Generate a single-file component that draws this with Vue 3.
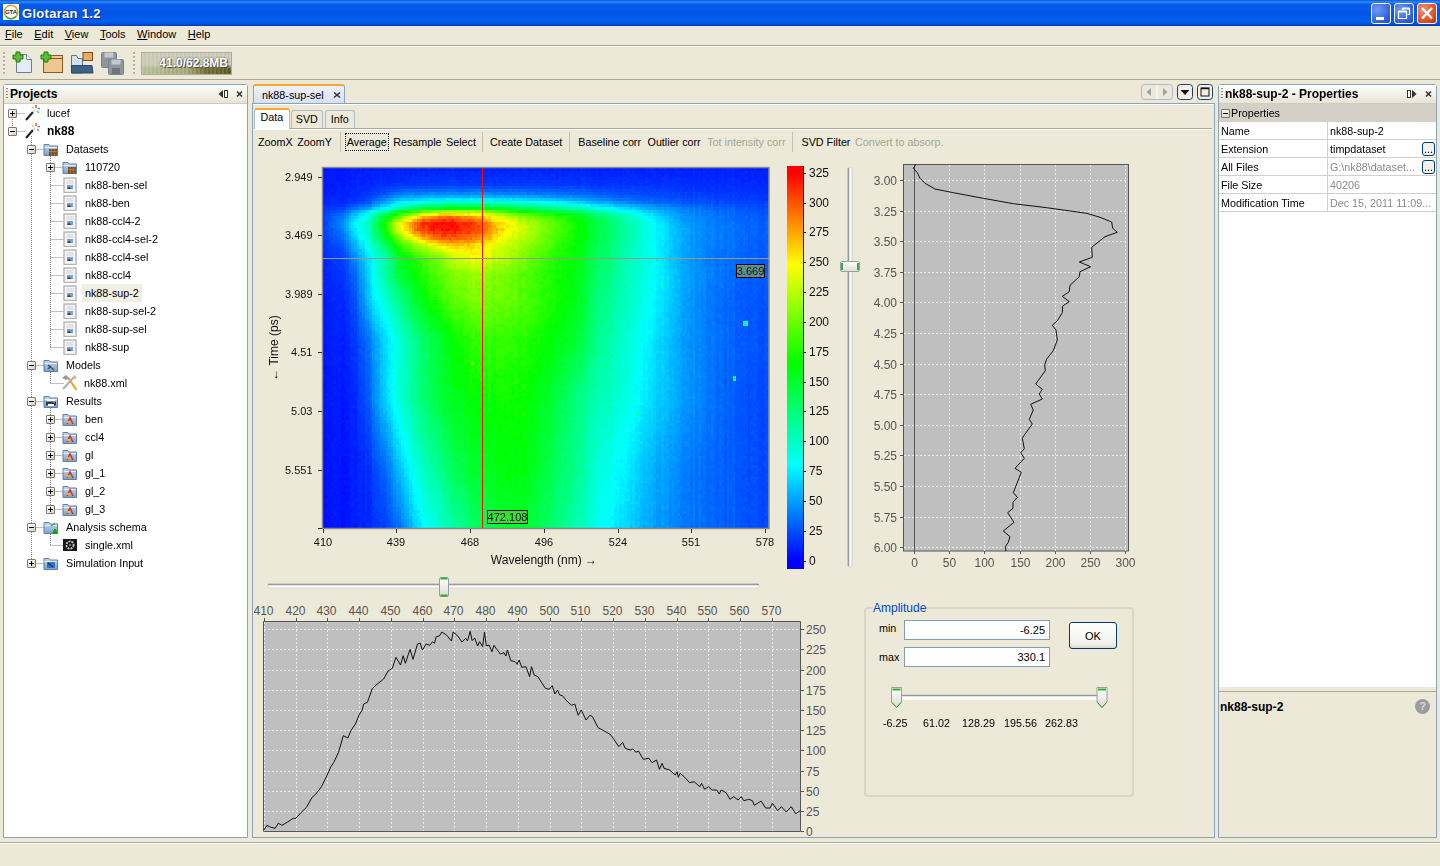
<template>
  <div class="window">
    <!-- icon sprite -->
    <svg class="sprite" width="0" height="0">
      <defs>
        <linearGradient id="fold" x1="0" y1="0" x2="0" y2="1">
          <stop offset="0" stop-color="#c4d6ea" />
          <stop offset="1" stop-color="#7ea3cc" />
        </linearGradient>
        <linearGradient id="thumbH" x1="0" y1="0" x2="0" y2="1">
          <stop offset="0" stop-color="#ffffff" />
          <stop offset="1" stop-color="#dcdcd0" />
        </linearGradient>
        <linearGradient id="cbar" x1="0" y1="0" x2="0" y2="1">
          <stop v-for="s in barStops" :key="s.o" :offset="s.o" :stop-color="s.c" />
        </linearGradient>
      </defs>
      <symbol id="i-folder" viewBox="0 0 16 16">
        <path d="M1 3.5h5l1.2 1.5H14.5V14.5H1z" fill="url(#fold)" stroke="#5c80a8" />
        <path d="M1.5 6.5H14" stroke="#e8f0f8" />
      </symbol>
      <symbol id="i-wand" viewBox="0 0 16 16">
        <path d="M2 15L9 7" stroke="#222" stroke-width="2" />
        <path d="M9 7L11 4.8" stroke="#ddd" stroke-width="2" />
        <path d="M12 0v3" stroke="#e04848" stroke-width="1.4" />
        <path d="M13.5 3.5h2.5" stroke="#4a8ce0" stroke-width="1.4" />
        <path d="M13 6l2 2" stroke="#58c858" stroke-width="1.4" />
        <path d="M8 2l1.5 1.5" stroke="#e8c040" stroke-width="1.4" />
      </symbol>
      <symbol id="i-data" viewBox="0 0 16 16">
        <use href="#i-folder" width="16" height="16" />
        <rect x="6" y="8" width="8" height="7" fill="#7c4f24" />
        <path d="M6 10.5h8M8.5 8v7M11.5 8v7" stroke="#b58850" stroke-width=".7" />
      </symbol>
      <symbol id="i-doc" viewBox="0 0 16 16">
        <rect x="2" y="1" width="12" height="14.500" fill="#f4f4f4" stroke="#b4b4b4" stroke-width="1.400" />
        <path d="M4.500 4h7M4.500 6h7" stroke="#d0d0d0" />
        <rect x="5" y="8" width="6" height="4" fill="#78a2d4" />
        <path d="M5 12l2-2.500 2.500 2.500z" fill="#2c4a70" />
      </symbol>
      <symbol id="i-models" viewBox="0 0 16 16">
        <use href="#i-folder" width="16" height="16" />
        <path d="M5 8l6 5M5 12l3-3" stroke="#3a4a60" stroke-width="1.3" />
      </symbol>
      <symbol id="i-tools" viewBox="0 0 18 18">
        <path d="M3 2.5L8 5 15.5 16" stroke="#e8a820" stroke-width="2.2" fill="none" />
        <path d="M14 2L2 15" stroke="#b0b0b0" stroke-width="2" />
        <path d="M1 4l4-3 3 3-3 2z" fill="#9a9a9a" />
        <path d="M12 1.500l3 .5 1 2.500-3 .5z" fill="#c0c0c0" />
      </symbol>
      <symbol id="i-results" viewBox="0 0 16 16">
        <use href="#i-folder" width="16" height="16" />
        <rect x="4" y="6.5" width="8" height="2" fill="#fff" />
        <rect x="3" y="8.5" width="10" height="4" fill="#2c3c50" />
        <rect x="5" y="11" width="6" height="2" fill="#fff" />
        <path d="M10 9.5h2" stroke="#e04848" />
      </symbol>
      <symbol id="i-result" viewBox="0 0 16 16">
        <use href="#i-folder" width="16" height="16" />
        <path d="M5 13l3-6 3 6" fill="none" stroke="#d82c20" stroke-width="1.5" />
        <path d="M4.5 11h4" stroke="#f0b020" stroke-width="2" />
      </symbol>
      <symbol id="i-schema" viewBox="0 0 16 16">
        <use href="#i-folder" width="16" height="16" />
        <path d="M8 7l4-3" stroke="#48a848" stroke-width="1.3" />
        <path d="M9 15l2-5h2l2 5z" fill="#18a018" />
      </symbol>
      <symbol id="i-film" viewBox="0 0 16 16">
        <rect x="1" y="2" width="14" height="12" fill="#181818" />
        <circle cx="8" cy="8" r="3.6" fill="none" stroke="#c4c4c4" stroke-width="1.8" stroke-dasharray="2 1" />
        <circle cx="8" cy="8" r="1" fill="#999" />
      </symbol>
      <symbol id="i-sim" viewBox="0 0 16 16">
        <use href="#i-folder" width="16" height="16" />
        <rect x="4" y="7" width="8" height="6" fill="#2f70c8" />
        <path d="M5 8l5 4" stroke="#16345c" stroke-width="1.2" />
      </symbol>
    </svg>

    <header class="titlebar">
      <svg class="app-logo" width="16" height="16" viewBox="0 0 16 16">
        <rect width="16" height="16" fill="#fff" />
        <circle cx="8" cy="8" r="6.8" fill="none" stroke="#e8a020" stroke-width="1.6" />
        <path d="M3 12.5A6.8 6.8 0 0 0 13 12.5" fill="none" stroke="#38a838" stroke-width="1.6" />
        <text x="8" y="10.4" class="logo-text" text-anchor="middle">GTA</text>
      </svg>
      <span class="app-title">Glotaran 1.2</span>
      <div class="win-btns">
        <span class="win-btn">
          <svg width="20" height="21" viewBox="0 0 20 21"><rect x="5" y="14" width="8" height="3" fill="#fff" /></svg>
        </span>
        <span class="win-btn">
          <svg width="20" height="21" viewBox="0 0 20 21">
            <path d="M8.5 7V5.500h7v6H13.500M4.500 8.500h8v7h-8z" fill="none" stroke="#fff" stroke-width="1.200" />
            <path d="M4.500 8.500h8M8.500 5.500h7" stroke="#fff" stroke-width="2" />
          </svg>
        </span>
        <span class="win-btn close">
          <svg width="20" height="21" viewBox="0 0 20 21"><path d="M5 5l10 10.500M15 5L5 15.500" stroke="#fff" stroke-width="2.200" /></svg>
        </span>
      </div>
    </header>

    <nav class="menubar">
      <span v-for="m in menus" :key="m"><u>{{ m[0] }}</u>{{ m.slice(1) }}</span>
    </nav>

    <div class="toolbar">
      <i class="grip"></i>
      <svg class="tb-icon first" width="22" height="24" viewBox="0 0 22 24">
        <path d="M4.500 3.500h10l5 5v13h-15z" fill="#e4ecf6" stroke="#6d7f96" />
        <path d="M14.500 3.500v5h5" fill="#fff" stroke="#6d7f96" />
        <path d="M4 1v3H1v4h3v3h4V8h3V4H8V1z" fill="#58c030" stroke="#207a10" />
      </svg>
      <svg class="tb-icon" width="24" height="24" viewBox="0 0 24 24">
        <rect x="3.500" y="4.500" width="19" height="17" fill="#f0c690" stroke="#8a5a28" />
        <path d="M3.500 7.500h19" stroke="#8a5a28" />
        <path d="M4 1v3H1v4h3v3h4V8h3V4H8V1z" fill="#58c030" stroke="#207a10" />
      </svg>
      <svg class="tb-icon" width="24" height="24" viewBox="0 0 24 24">
        <path d="M1.500 22V4.500h5l1.500 3h4.500V22z" fill="#d4e0ee" stroke="#5a7694" />
        <rect x="13" y="1.500" width="9.500" height="8" fill="#e6ad68" stroke="#7a4c1e" />
        <path d="M1.500 14.500h20.500l1 7.500H1.500z" fill="#3d6286" stroke="#2c4866" />
      </svg>
      <svg class="tb-icon" width="24" height="24" viewBox="0 0 24 24">
        <rect x="1.500" y="1.500" width="15" height="15" rx="1" fill="#8e969e" stroke="#7a8288" />
        <rect x="4.500" y="1.500" width="9" height="5" fill="#c2c8ce" />
        <rect x="8.500" y="8.500" width="15" height="15" rx="1" fill="#8e969e" stroke="#7a8288" />
        <rect x="11.500" y="8.500" width="9" height="5" fill="#c2c8ce" />
        <rect x="12" y="17" width="8" height="6" fill="#6c747c" />
      </svg>
      <i class="grip second"></i>
      <div class="memory"><span>41.0/62.8MB</span></div>
    </div>

    <main class="workspace">
      <!-- left: project tree -->
      <section class="panel projects">
        <div class="panel-head">
          <i class="head-grip"></i>
          <span class="panel-title">Projects</span>
          <svg class="head-act" width="28" height="12" viewBox="0 0 28 12">
            <path d="M6 2v8L1.500 6z" fill="#333" />
            <rect x="7.500" y="2.500" width="3" height="7" fill="#fff" stroke="#333" />
            <path d="M20 3.500l5 5M25 3.500l-5 5" stroke="#333" stroke-width="1.600" />
          </svg>
        </div>
        <div class="tree">
          <svg class="tree-lines" width="243" height="734" viewBox="4 104 243 734">
            <path :d="treeLines" fill="none" stroke="#808080" stroke-dasharray="1 1" />
          </svg>
          <div v-for="r in rows" :key="r.y" class="tree-row" :class="'lvl' + r.lvl">
            <span class="handle" :class="r.exp"></span>
            <svg class="tree-icon" :class="r.icon"><use :href="'#i-' + r.icon" width="100%" height="100%" /></svg>
            <span class="tree-label" :class="{ bold: r.bold, picked: r.picked }">{{ r.label }}</span>
          </div>
        </div>
      </section>

      <!-- center: editor with the plots -->
      <section class="editor">
        <div class="doc-tabs">
          <div class="doc-tab">
            <span>nk88-sup-sel</span>
            <svg width="8" height="8" viewBox="0 0 8 8"><path d="M1 1.500l6 5M7 1.500l-6 5" stroke="#333" stroke-width="1.600" /></svg>
          </div>
          <div class="doc-ctl">
            <svg width="32" height="16" viewBox="0 0 32 16">
              <rect x=".5" y=".5" width="31" height="15" rx="3" fill="#ece9d8" stroke="#a8bad0" />
              <path d="M16 1v14" stroke="#fff" />
              <path d="M10 4v8L5.500 8z" fill="#a0a0a0" />
              <path d="M22 4v8l4.500-4z" fill="#a0a0a0" />
            </svg>
            <svg width="16" height="16" viewBox="0 0 16 16">
              <rect x=".5" y=".5" width="15" height="15" rx="3" fill="#f2f0e4" stroke="#1c3f68" />
              <path d="M3.500 6h9L8 11z" fill="#111" />
            </svg>
            <svg width="16" height="16" viewBox="0 0 16 16">
              <rect x=".5" y=".5" width="15" height="15" rx="3" fill="#f2f0e4" stroke="#1c3f68" />
              <rect x="4" y="4" width="8" height="8" fill="none" stroke="#111" />
              <path d="M4 4.500h8" stroke="#111" stroke-width="1.500" />
            </svg>
          </div>
        </div>

        <div class="doc-pane">
          <div class="sub-tabs">
            <span class="sub-tab active">Data</span>
            <span class="sub-tab">SVD</span>
            <span class="sub-tab info">Info</span>
          </div>
          <div class="sub-pane">
            <div class="actions">
              <span class="act">ZoomX</span>
              <span class="act nudge-in">ZoomY</span>
              <i class="sep nudge-out"></i>
              <span class="act focused">Average</span>
              <span class="act">Resample</span>
              <span class="act nudge-in">Select</span>
              <i class="sep"></i>
              <span class="act">Create Dataset</span>
              <i class="sep"></i>
              <span class="act nudge-out">Baseline corr</span>
              <span class="act">Outlier corr</span>
              <span class="act off">Tot intensity corr</span>
              <i class="sep"></i>
              <span class="act nudge-out">SVD Filter</span>
              <span class="act off nudge-in">Convert to absorp.</span>
            </div>

            <div class="plots-top">
              <div class="heat">
                <canvas ref="heatCanvas" class="heat-canvas" width="446" height="360"></canvas>
                <svg width="529" height="415" viewBox="254 160 529 415">
                  <rect x="322.500" y="167.500" width="446.500" height="361" fill="none" stroke="#8a8a8a" stroke-width="1.500" />
                  <path d="M482.500 168V528" stroke="#f01010" />
                  <path d="M323 258.500H769" stroke="#9a9a80" />
                  <g v-for="t in heatY" :key="t.l">
                    <path :d="`M318 ${t.y + .5}h4`" stroke="#333" />
                    <text x="312.500" :y="t.y + 1" class="tk" text-anchor="end" dominant-baseline="middle">{{ t.l }}</text>
                  </g>
                  <path d="M318 528.500h4" stroke="#333" />
                  <g v-for="t in heatX" :key="t.l">
                    <path :d="`M${t.x + .5} 529v4`" stroke="#333" />
                    <text :x="t.x" y="543.500" class="tk" text-anchor="middle" dominant-baseline="middle">{{ t.l }}</text>
                  </g>
                  <text x="544" y="561" class="tk big" text-anchor="middle" dominant-baseline="middle">Wavelength (nm) →</text>
                  <text transform="translate(275 348) rotate(-90)" class="tk big" text-anchor="middle" dominant-baseline="middle">← Time (ps)</text>
                  <rect x="736.500" y="264.500" width="28" height="13" fill="#5f8f8f" stroke="#000" />
                  <text x="750.500" y="272" class="tk" text-anchor="middle" dominant-baseline="middle">3.669</text>
                  <rect x="487.500" y="510.500" width="40" height="13" fill="#33e033" stroke="#000" />
                  <text x="507.500" y="518" class="tk" text-anchor="middle" dominant-baseline="middle">472.108</text>
                </svg>
              </div>

              <svg width="53" height="415" viewBox="783 160 53 415">
                <rect x="787" y="166" width="16" height="403" fill="url(#cbar)" />
                <path d="M803.500 166V569" stroke="#222" />
                <g v-for="t in barTicks" :key="t.l">
                  <path :d="`M803 ${t.y + .5}h3`" stroke="#222" />
                  <text x="809" :y="t.y + 1" class="tk big" dominant-baseline="middle">{{ t.l }}</text>
                </g>
              </svg>

              <svg width="28" height="415" viewBox="836 160 28 415">
                <rect x="848" y="167" width="4" height="400" rx="2" fill="#fff" stroke="#b8b8a8" stroke-width=".6" />
                <path d="M848.500 168V566" stroke="#999" stroke-width="1.500" />
                <rect x="840.500" y="261.500" width="19" height="10" rx="1.500" fill="url(#thumbH)" stroke="#8ea4a4" />
                <path d="M842 263v7M858 263v7" stroke="#30a030" stroke-width="1.800" />
              </svg>

              <svg width="276" height="415" viewBox="864 160 276 415">
                <rect x="903.500" y="164.500" width="225" height="386.500" fill="#bfbfbf" stroke="#555" />
                <path v-for="t in profX" :key="t.l" :d="`M${t.x} 165V551`" stroke="#eaeaea" stroke-dasharray="2 2" />
                <path v-for="t in profY" :key="t.l" :d="`M904 ${t.y}H1128`" stroke="#eaeaea" stroke-dasharray="2 2" />
                <path d="M914.500 165V551" stroke="#555" />
                <polyline :points="profileLine" fill="none" stroke="#111" />
                <g v-for="t in profX" :key="t.l">
                  <path :d="`M${t.x} 551v3`" stroke="#555" />
                  <text :x="t.x" y="564" class="pl" text-anchor="middle" dominant-baseline="middle">{{ t.l }}</text>
                </g>
                <g v-for="t in profY" :key="t.l">
                  <path :d="`M900 ${t.y}h3`" stroke="#555" />
                  <text x="897" :y="t.y + 1" class="pl" text-anchor="end" dominant-baseline="middle">{{ t.l }}</text>
                </g>
              </svg>
            </div>

            <div class="plots-bottom">
              <div class="spectrum">
                <svg class="h-slider" width="606" height="25" viewBox="254 575 606 25">
                  <rect x="267.500" y="584" width="492" height="4" rx="2" fill="#fff" stroke="#c8c8b8" stroke-width=".6" />
                  <path d="M268 584.500H759" stroke="#999" stroke-width="1.500" />
                  <rect x="439.500" y="577.500" width="9" height="19" rx="1.500" fill="url(#thumbH)" stroke="#8ea4a4" />
                  <path d="M440.500 578.500h7M440.500 595.500h7" stroke="#30b030" stroke-width="1.800" />
                </svg>
                <svg width="606" height="238" viewBox="254 600 606 238">
                  <rect x="263.500" y="621.500" width="537" height="209.500" fill="#bfbfbf" />
                  <path v-for="t in specX" :key="t.l" :d="`M${t.x} 622V831`" stroke="#eaeaea" stroke-dasharray="2 2" />
                  <path v-for="t in specY" :key="t.l" :d="`M264 ${t.y}H800`" stroke="#eaeaea" stroke-dasharray="2 2" />
                  <path d="M263.500 831.500V621.500H800.500V831.500z" fill="none" stroke="#555" />
                  <polyline :points="spectrumLine" fill="none" stroke="#111" />
                  <g v-for="t in specX" :key="t.l">
                    <path :d="`M${t.x} 618v3`" stroke="#555" />
                    <text :x="t.x - 1" y="612" class="pl" text-anchor="middle" dominant-baseline="middle">{{ t.l }}</text>
                  </g>
                  <g v-for="t in specY" :key="t.l">
                    <path :d="`M801 ${t.y}h3`" stroke="#555" />
                    <text x="806" :y="t.y + 1" class="pl" dominant-baseline="middle">{{ t.l }}</text>
                  </g>
                </svg>
              </div>

              <fieldset class="amplitude">
                <legend>Amplitude</legend>
                <div class="amp-form">
                  <div class="amp-fields">
                    <label><span class="min-cap">min</span><input value="-6.25" readonly /></label>
                    <label>max<input value="330.1" readonly /></label>
                  </div>
                  <button class="ok">OK</button>
                </div>
                <svg class="amp-slider" width="224" height="24" viewBox="888 686 224 24">
                  <rect x="902" y="695" width="195" height="5" fill="#fff" />
                  <path d="M902 695.500H1097" stroke="#999" stroke-width="1.500" />
                  <g v-for="x in [891.500, 1097]" :key="x">
                    <path :d="`M${x} 687.500h10v14.500l-5 5.500-5-5.500z`" fill="url(#thumbH)" stroke="#8ea4a4" />
                    <path :d="`M${x + 1} 689.500h8`" stroke="#30b030" stroke-width="2" />
                    <path :d="`M${x + .5} 702.500l4.500 5 4.500-5`" fill="none" stroke="#30a030" />
                  </g>
                </svg>
                <div class="amp-labels">
                  <span>-6.25</span><span>61.02</span><span>128.29</span><span>195.56</span><span>262.83</span>
                </div>
              </fieldset>
            </div>
          </div>
        </div>
      </section>

      <!-- right: properties -->
      <section class="panel props">
        <div class="panel-head">
          <i class="head-grip"></i>
          <span class="panel-title">nk88-sup-2 - Properties</span>
          <svg class="head-act" width="28" height="12" viewBox="0 0 28 12">
            <rect x="1.500" y="2.500" width="3" height="7" fill="#fff" stroke="#333" />
            <path d="M6 2v8l4.500-4z" fill="#333" />
            <path d="M20 3.500l5 5M25 3.500l-5 5" stroke="#333" stroke-width="1.600" />
          </svg>
        </div>
        <div class="prop-table">
          <div class="prop-group"><span class="handle open"></span>Properties</div>
          <div v-for="p in props" :key="p.k" class="prop-row">
            <span class="prop-key">{{ p.k }}</span>
            <span class="prop-val" :class="{ ro: p.ro }">{{ p.v }}</span>
            <button v-if="p.more" class="more">...</button>
          </div>
        </div>
        <div class="prop-help">
          <b>nk88-sup-2</b>
          <span class="help-btn">?</span>
        </div>
      </section>
    </main>

    <footer class="statusbar"></footer>
  </div>
</template>

<script setup>
import { ref, onMounted } from 'vue'

const menus = ['File', 'Edit', 'View', 'Tools', 'Window', 'Help']

// label, level, expander, icon
const tree = [
  ['lucef', 0, 'closed', 'wand'],
  ['nk88', 0, 'open', 'wand', 'bold'],
  ['Datasets', 1, 'open', 'data'],
  ['110720', 2, 'closed', 'data'],
  ['nk88-ben-sel', 2, '', 'doc'],
  ['nk88-ben', 2, '', 'doc'],
  ['nk88-ccl4-2', 2, '', 'doc'],
  ['nk88-ccl4-sel-2', 2, '', 'doc'],
  ['nk88-ccl4-sel', 2, '', 'doc'],
  ['nk88-ccl4', 2, '', 'doc'],
  ['nk88-sup-2', 2, '', 'doc', 'picked'],
  ['nk88-sup-sel-2', 2, '', 'doc'],
  ['nk88-sup-sel', 2, '', 'doc'],
  ['nk88-sup', 2, '', 'doc'],
  ['Models', 1, 'open', 'models'],
  ['nk88.xml', 2, '', 'tools'],
  ['Results', 1, 'open', 'results'],
  ['ben', 2, 'closed', 'result'],
  ['ccl4', 2, 'closed', 'result'],
  ['gl', 2, 'closed', 'result'],
  ['gl_1', 2, 'closed', 'result'],
  ['gl_2', 2, 'closed', 'result'],
  ['gl_3', 2, 'closed', 'result'],
  ['Analysis schema', 1, 'open', 'schema'],
  ['single.xml', 2, '', 'film'],
  ['Simulation Input', 1, 'closed', 'sim'],
]
const rows = tree.map((r, i) => ({
  label: r[0], lvl: r[1], exp: r[2], icon: r[3], y: 113 + 18 * i,
  bold: r[4] === 'bold', picked: r[4] === 'picked',
}))

// dotted tree connectors
let lines = 'M12.500 113V131M31.500 136V563M50.500 154V347M50.500 370V383M50.500 406V509M50.500 532V545'
for (const r of rows) {
  const hx = [12.5, 31.5, 50.5][r.lvl]
  const from = r.exp ? hx + 5 : hx
  lines += `M${from} ${r.y + .5}H${hx + 13}`
}
const treeLines = lines

const props = [
  { k: 'Name', v: 'nk88-sup-2' },
  { k: 'Extension', v: 'timpdataset', more: true },
  { k: 'All Files', v: 'G:\\nk88\\dataset...', ro: true, more: true },
  { k: 'File Size', v: '40206', ro: true },
  { k: 'Modification Time', v: 'Dec 15, 2011 11:09...', ro: true },
]

// colour map of the heat plot and its legend
const cmap = [
  [0, [0, 0, 255]],
  [80, [0, 255, 255]],
  [165, [0, 255, 0]],
  [248, [255, 255, 0]],
  [325, [255, 0, 0]],
]
const toRgb = (v) => {
  if (v <= 0) return cmap[0][1]
  for (let i = 1; i < cmap.length; i++) {
    if (v <= cmap[i][0]) {
      const a = cmap[i - 1], b = cmap[i]
      const t = (v - a[0]) / (b[0] - a[0])
      return a[1].map((c, j) => Math.round(c + (b[1][j] - c) * t))
    }
  }
  return cmap[4][1]
}
const barStops = [{ o: 0, c: 'rgb(255,0,0)' }, ...cmap.slice().reverse().map(([v, c]) => ({
  o: ((560.7 - v * 1.194 - 166) / 403).toFixed(4),
  c: `rgb(${c.join(',')})`,
})), { o: 1, c: 'rgb(0,0,255)' }]

const barTicks = []
for (let v = 325; v >= 0; v -= 25) barTicks.push({ l: String(v), y: Math.round(560.7 - v * 1.194) })

const heatY = [['2.949', 177], ['3.469', 235], ['3.989', 294], ['4.51', 352], ['5.03', 411], ['5.551', 470]].map(([l, y]) => ({ l, y }))
const heatX = [['410', 323], ['439', 396], ['468', 470], ['496', 544], ['524', 618], ['551', 691], ['578', 765]].map(([l, x]) => ({ l, x }))

const profX = [0, 50, 100, 150, 200, 250, 300].map((v, i) => ({ l: String(v), x: Math.round(914 + i * 35.2) + .5 }))
const profY = []
for (let i = 0; i <= 12; i++) profY.push({ l: (3 + i * .25).toFixed(2), y: Math.round(180 + i * 30.6) + .5 })

const specX = []
for (let i = 0; i < 17; i++) specX.push({ l: String(410 + i * 10), x: Math.round(263.8 + i * 31.75) + .5 })
const specY = []
for (let i = 0; i <= 10; i++) specY.push({ l: String(250 - i * 25), y: Math.round(629.3 + i * 20.18) + .5 })

// traces read off the plots
const profilePts = [408,13,400,25,412,38,420,55,435,70,465,87,520,98,610,115,700,131,800,143,920,160,960,172,995,186,998,205,1012,217,975,230,965,238,935,262,937,292,898,306,932,320,900,335,898,350,870,376,868,395,847,409,868,425,848,438,847,458,832,482,817,496,828,510,832,540,820,572,800,597,794,615,796,632,767,672,787,688,778,702,787,717,752,733,760,750,748,778,757,792,733,825,727,835,733,866,722,878,733,895,705,925,724,937,700,998,712,1012,699,1027,699,1045,683,1058,702,1087,670,1113,690,1130,685,1147,676,1160,678,1173]
const spectrumPts = [37,780,45,766,55,772,67,775,75,760,85,766,100,756,115,745,122,745,135,728,150,712,165,682,175,672,190,650,205,615,215,590,222,578,235,548,248,497,260,504,268,482,280,462,290,435,298,420,302,402,312,397,325,356,335,345,355,327,367,303,378,295,388,262,400,285,407,257,413,280,425,238,433,268,445,222,452,219,458,240,468,222,478,226,485,215,490,220,495,200,503,198,510,186,522,195,535,213,540,186,552,198,563,216,573,205,578,213,585,184,590,212,597,204,605,228,610,215,618,230,623,186,628,228,635,225,643,245,648,226,665,252,675,248,680,258,684,240,693,272,705,275,710,283,715,270,722,292,733,290,743,320,748,290,755,315,765,320,785,355,795,358,803,347,810,372,817,360,823,375,830,377,845,397,855,406,863,402,872,436,880,420,893,450,903,436,910,440,925,473,940,482,957,493,965,505,980,530,990,517,997,535,1010,540,1018,537,1025,547,1032,543,1045,568,1060,565,1068,578,1080,570,1088,598,1095,580,1100,595,1115,600,1130,615,1135,605,1138,622,1143,610,1155,622,1168,638,1180,635,1195,650,1200,640,1208,658,1218,650,1228,660,1240,660,1247,672,1252,660,1265,668,1275,688,1285,680,1297,690,1305,680,1312,692,1325,688,1335,692,1340,706,1358,693,1370,714,1382,714,1388,700,1402,722,1412,710,1425,726,1438,710,1450,731,1462,722]
const toPoints = (pts, fx, fy) => {
  const out = []
  for (let i = 0; i < pts.length; i += 2) out.push(`${fx(pts[i]).toFixed(1)},${fy(pts[i + 1]).toFixed(1)}`)
  return out.join(' ')
}
const profileLine = toPoints(profilePts, (x) => 780 + x / 3, (y) => 160 + y / 3)
const spectrumLine = toPoints(spectrumPts, (x) => 250 + x / 2.657, (y) => 570 + y / 3)

// heat map control values, bilinear interpolated
const gx = [323, 340, 355, 370, 385, 400, 420, 440, 460, 480, 500, 525, 550, 575, 600, 625, 650, 675, 700, 735, 768]
const gy = [168, 185, 193, 198, 203, 208, 213, 218, 224, 230, 238, 246, 258, 275, 300, 340, 400, 470, 528]
const grid = [
  [6,7,8,8,9,10,10,10,10,10,10,10,10,10,10,10,10,10,10,10,10],
  [8,9,10,12,14,16,18,18,18,18,18,18,18,18,16,16,15,15,14,14,12],
  [8,10,12,16,24,34,38,40,40,40,38,36,34,32,28,24,22,20,18,16,15],
  [10,12,14,20,38,52,60,62,62,62,60,58,52,46,38,30,26,24,22,18,16],
  [12,14,18,30,55,78,92,100,104,104,100,92,84,72,58,44,36,30,26,22,20],
  [14,18,32,50,75,105,135,150,155,152,145,132,120,105,85,68,52,42,35,28,24],
  [16,28,55,85,125,170,215,240,245,238,210,180,165,148,118,92,68,50,40,32,26],
  [18,35,65,95,155,205,275,300,295,275,240,212,190,168,138,108,78,54,42,33,28],
  [18,40,75,105,170,245,310,325,318,300,262,225,200,172,142,112,86,58,44,35,30],
  [18,35,72,105,165,240,300,320,318,302,262,228,200,172,142,112,86,60,45,35,30],
  [16,30,62,98,148,205,265,298,300,282,250,222,196,168,142,112,86,60,45,35,30],
  [14,24,52,88,130,178,218,250,262,255,235,212,190,165,138,108,84,60,44,34,28],
  [12,18,40,75,105,150,180,205,235,245,225,205,180,165,135,105,85,60,42,32,28],
  [10,15,30,70,110,145,170,195,210,215,205,190,175,160,130,105,85,62,45,32,28],
  [8,12,22,65,92,120,155,180,198,205,200,190,175,160,125,102,82,60,42,30,25],
  [7,10,15,38,68,92,125,150,170,182,182,175,165,150,118,95,75,56,42,30,25],
  [6,8,10,30,65,92,122,145,158,165,168,165,150,125,105,90,70,55,42,28,22],
  [5,7,8,15,32,60,95,118,140,152,160,160,140,120,92,75,57,45,35,28,22],
  [5,6,8,12,20,35,72,95,115,135,148,148,132,108,85,68,52,42,35,28,22],
]
const locate = (arr, v) => {
  let i = 0
  while (i < arr.length - 2 && v > arr[i + 1]) i++
  return [i, Math.min(1, Math.max(0, (v - arr[i]) / (arr[i + 1] - arr[i])))]
}
const sample = (x, y) => {
  const [i, tx] = locate(gx, x)
  const [j, ty] = locate(gy, y)
  const top = grid[j][i] * (1 - tx) + grid[j][i + 1] * tx
  const bot = grid[j + 1][i] * (1 - tx) + grid[j + 1][i + 1] * tx
  return top * (1 - ty) + bot * ty
}

const heatCanvas = ref(null)
onMounted(() => {
  const ctx = heatCanvas.value.getContext('2d')
  let seed = 4711
  const rnd = () => {
    seed = (seed * 16807) % 2147483647
    return seed / 2147483647 - .5
  }
  const cw = 2.625, ch = 3
  const cols = Math.ceil(446 / cw)
  const streak = Array.from({ length: cols }, () => rnd() * 5)
  for (let r = 0; r < 120; r++) {
    for (let c = 0; c < cols; c++) {
      const x = 323 + c * cw, y = 168 + r * ch
      const v = sample(x + cw / 2, y + ch / 2)
      const noisy = v + streak[c] * (y > 200 ? 1 : .4) + rnd() * (3 + v * .035)
      ctx.fillStyle = `rgb(${toRgb(noisy).join(',')})`
      ctx.fillRect(Math.floor(c * cw), r * ch, Math.ceil(cw), ch)
    }
  }
  // stray hot pixels
  const spots = [[420, 153, 5, 5, 105], [410, 208, 3, 5, 130], [337, 114, 3, 3, 95], [148, 194, 3, 3, 215], [314, 245, 2, 3, 125]]
  for (const [x, y, w, h, v] of spots) {
    ctx.fillStyle = `rgb(${toRgb(v).join(',')})`
    ctx.fillRect(x, y, w, h)
  }
})
</script>

<style scoped>
.window {
  width: 1440px;
  height: 866px;
  display: flex;
  flex-direction: column;
  overflow: hidden;
  background: #ece9d8;
  color: #000;
  font: 10.75px "Liberation Sans", Arial, sans-serif;
}
.sprite { position: absolute; }

.titlebar {
  height: 26px;
  flex: none;
  display: flex;
  align-items: center;
  padding-left: 3px;
  background: linear-gradient(180deg, #0a55d8 0, #2f8cf8 2px, #0a5cec 4px, #0054e8 14px, #0060f0 21px, #0050d8 24px, #0038b8 26px);
}
.app-logo { margin-top: -2px; }
.logo-text { font: bold 6px "Liberation Sans", sans-serif; fill: #222; }
.app-title {
  margin-left: 3px;
  color: #fff;
  font: bold 13px "Liberation Sans", sans-serif;
  letter-spacing: .3px;
  text-shadow: 1px 1px 0 #0a2c88;
}
.win-btns { margin-left: auto; display: flex; gap: 3px; padding-right: 3px; }
.win-btn {
  width: 20px;
  height: 21px;
  border: 1px solid #fff;
  border-radius: 3px;
  box-sizing: border-box;
  background: radial-gradient(circle at 30% 30%, #6f9bf2, #2a5cd8 75%, #2048b8);
  display: flex;
}
.win-btn svg { margin: -1px; flex: none; }
.win-btn.close { background: radial-gradient(circle at 30% 30%, #ee9478, #d84a20 70%, #b8340c); }

.menubar {
  height: 19px;
  flex: none;
  box-sizing: content-box;
  display: flex;
  align-items: center;
  gap: 11.5px;
  padding-left: 5px;
  border-bottom: 1px solid #aca899;
  font-size: 11px;
  line-height: 17px;
}
.menubar span { margin-bottom: 2px; }

.toolbar {
  flex: none;
  display: flex;
  align-items: center;
  border-top: 1px solid #fbfaf4;
  border-bottom: 1px solid #aca899;
  height: 32px;
}
.grip {
  width: 2px;
  height: 22px;
  margin-left: 3px;
  background: repeating-linear-gradient(180deg, #b4b09c 0 2px, #fff 2px 3px, transparent 3px 4px);
}
.grip.second { margin-left: 9px; margin-right: 6px; }
.tb-icon { margin-left: 6px; }
.tb-icon.first { margin-left: 7px; }
.memory {
  width: 91px;
  height: 23px;
  box-sizing: border-box;
  display: flex;
  align-items: center;
  justify-content: flex-end;
  padding-right: 3px;
  border: 1px solid #b0ae9a;
  background:
    repeating-linear-gradient(90deg, rgba(255, 255, 255, .12) 0 2px, transparent 2px 4px),
    linear-gradient(180deg, #c8c8b4 0 55%, rgba(200, 200, 180, 0) 75%),
    linear-gradient(90deg, #b4bd94 0, #a2a672 50%, #6e6a2a 72%, #5a5620 100%);
  color: #fff;
  font: bold 12px "Liberation Sans", sans-serif;
  text-shadow: 0 0 2px #444, 1px 1px 0 #555;
}

.workspace {
  flex: 1;
  min-height: 0;
  display: flex;
  padding: 4px 3px 4px;
  gap: 4px;
}

.panel {
  display: flex;
  flex-direction: column;
  box-sizing: border-box;
  border: 1px solid #88a4bf;
  border-radius: 3px 3px 0 0;
  background: #fff;
}
.projects { width: 245px; flex: none; }
.props { width: 219px; flex: none; margin-left: -1px; }
.panel-head {
  height: 19px;
  flex: none;
  display: flex;
  align-items: center;
  background: linear-gradient(180deg, #fdfdfb, #e8e5d6);
  border-bottom: 1px solid #d0cdbc;
  box-sizing: border-box;
}
.head-grip {
  width: 2px;
  height: 12px;
  margin: 0 2px 0 2px;
  background: repeating-linear-gradient(180deg, #908c78 0 1px, transparent 1px 3px);
}
.panel-title { font: bold 12px "Liberation Sans", sans-serif; white-space: nowrap; }
.head-act { margin-left: auto; margin-right: 2px; flex: none; }

.tree { position: relative; flex: 1; overflow: hidden; }
.tree-lines { position: absolute; left: 0; top: 0; pointer-events: none; }
.tree-row {
  position: relative;
  height: 18px;
  display: flex;
  align-items: center;
}
.lvl0 { padding-left: 4px; }
.lvl1 { padding-left: 23px; }
.lvl2 { padding-left: 42px; }
.handle {
  position: relative;
  width: 9px;
  height: 9px;
  flex: none;
  box-sizing: border-box;
  margin-right: 7px;
}
.handle.open, .handle.closed {
  border: 1px solid #7a7a6c;
  border-radius: 1px;
  background: linear-gradient(135deg, #fff, #d8d4c0);
}
.handle.open::before, .handle.closed::before {
  content: "";
  position: absolute;
  left: 1px;
  top: 3px;
  width: 5px;
  height: 1px;
  background: #000;
}
.handle.closed::after {
  content: "";
  position: absolute;
  left: 3px;
  top: 1px;
  width: 1px;
  height: 5px;
  background: #000;
}
.tree-icon { flex: none; width: 16px; height: 16px; margin-right: 7px; }
.tree-icon.tools { width: 18px; height: 18px; margin: 0 5px 0 -1px; }
.tree-label {
  height: 18px;
  box-sizing: border-box;
  padding: 0 3px;
  margin-left: -3px;
  line-height: 18px;
  white-space: nowrap;
}
.tree-label.bold { font-weight: bold; font-size: 12px; }
.tree-label.picked { background: #f1efe2; }

.editor {
  width: 963px;
  flex: none;
  display: flex;
  flex-direction: column;
}
.doc-tabs {
  height: 19px;
  flex: none;
  display: flex;
  justify-content: space-between;
  padding: 0 2px 0 1px;
}
.doc-tab {
  width: 92px;
  box-sizing: border-box;
  display: flex;
  align-items: center;
  justify-content: space-between;
  padding: 0 3px 0 8px;
  border: 1px solid #88a4bf;
  border-top: 2px solid #f4a92c;
  border-bottom: 0;
  border-radius: 3px 3px 0 0;
  background: linear-gradient(180deg, #eef1f8, #d8e0f0);
}
.doc-ctl { display: flex; gap: 4px; align-items: flex-start; }
.doc-pane {
  flex: 1;
  min-height: 0;
  box-sizing: border-box;
  border: 1px solid #88a4bf;
  box-shadow: inset 0 1px 0 #fff;
  padding: 3px 2px 0 1px;
  display: flex;
  flex-direction: column;
}
.sub-tabs {
  height: 21px;
  flex: none;
  display: flex;
  align-items: flex-end;
  gap: 1px;
}
.sub-tab {
  height: 18px;
  box-sizing: border-box;
  padding: 2px 4px 0;
  border: 1px solid #b0bcc8;
  border-bottom: 0;
  border-radius: 3px 3px 0 0;
}
.sub-tab.info { margin-left: 1px; padding: 2px 5px 0; }
.sub-tab.active {
  height: 21px;
  padding: 1px 5.5px 0;
  background: #fff;
  border-top: 2px solid #f4a92c;
  position: relative;
  margin-bottom: -1px;
}
.sub-pane {
  flex: 1;
  min-height: 0;
  display: flex;
  flex-direction: column;
  border-top: 1px solid #aca899;
  box-shadow: inset 0 1px 0 #fff;
}

.actions {
  height: 27px;
  flex: none;
  box-sizing: border-box;
  display: flex;
  align-items: center;
  gap: 6.5px;
  padding: 0 0 2px 4px;
  white-space: nowrap;
}
.sep { width: 1px; height: 20px; background: #c4c1ae; }
.off { color: #a6a498; }
.nudge-in { margin-left: -2px; }
.nudge-out { margin-left: 2px; }
.focused {
  padding: 2px 1px;
  margin: 0 -1px 0 -2px;
  outline: 1px dotted #000;
  box-shadow: 0 0 0 2px #f4f2e6;
}

.plots-top { height: 415px; margin-top: 4px; flex: none; display: flex; }
.plots-top svg { display: block; flex: none; }
.heat { display: grid; width: 529px; height: 415px; flex: none; }
.heat > * { grid-area: 1 / 1; }
.heat-canvas { margin: 8px 0 0 69px; width: 446px; height: 360px; image-rendering: pixelated; }
.tk { font: 11px "Liberation Sans", sans-serif; fill: #111; }
.tk.big { font-size: 12px; }
.pl { font: 12px "Liberation Sans", sans-serif; fill: #555; }

.plots-bottom { flex: 1; min-height: 0; display: flex; }
.spectrum { width: 606px; flex: none; }
.spectrum svg { display: block; }
.amplitude {
  width: 270px;
  height: 195px;
  box-sizing: border-box;
  margin: 27px 0 0 4px;
  padding: 0;
  border: 2px solid #d8d6c4;
  border-radius: 4px;
  min-width: 0;
}
.amplitude legend {
  margin-left: 7px;
  padding: 0;
  color: #0046d5;
  font-size: 12px;
  line-height: 12px;
}
.amp-form { display: flex; padding-top: 6px; }
.amp-fields { display: flex; flex-direction: column; gap: 7px; }
.amp-fields label {
  width: 184px;
  height: 20px;
  box-sizing: border-box;
  display: flex;
  justify-content: space-between;
  align-items: center;
  padding-left: 13px;
}
.min-cap { margin-bottom: 4px; }
.amp-fields input {
  width: 146px;
  height: 20px;
  box-sizing: border-box;
  border: 1px solid #7f9db9;
  padding: 0 4px;
  text-align: right;
  font: 11px "Liberation Sans", sans-serif;
  background: #fff;
  outline: none;
}
.ok {
  width: 48px;
  height: 27px;
  margin: 2px 0 0 19px;
  border: 1px solid #003c74;
  border-radius: 3px;
  background: linear-gradient(180deg, #fff, #f0f0ea 85%, #dcd8c8);
  font: 11px "Liberation Sans", sans-serif;
}
.amp-slider { display: block; margin: 19px 0 0 22px; }
.amp-labels { display: flex; padding: 7px 0 0 17px; }
.amp-labels span { width: 40px; flex: none; }
.amp-labels span:nth-child(2) { width: 39px; }
.amp-labels span:nth-child(3) { width: 42px; }
.amp-labels span:nth-child(4) { width: 41px; }

.prop-table { flex: 1; min-height: 0; }
.prop-group {
  height: 18px;
  box-sizing: border-box;
  display: flex;
  align-items: center;
  background: #d4d0c8;
  padding-left: 2px;
}
.prop-group .handle { margin-right: 1px; }
.prop-row {
  height: 18px;
  box-sizing: border-box;
  display: flex;
  align-items: center;
  border-bottom: 1px solid #d4d0c8;
}
.prop-key {
  width: 109px;
  flex: none;
  height: 100%;
  line-height: 18px;
  box-sizing: border-box;
  padding-left: 2px;
  border-right: 1px solid #d4d0c8;
}
.prop-val { padding: 1px 0 0 2px; white-space: nowrap; overflow: hidden; flex: 1; }
.prop-val.ro { color: #8a8a8a; }
.more {
  width: 13px;
  height: 14px;
  margin-right: 1px;
  padding: 0;
  flex: none;
  border: 1px solid #003c74;
  border-radius: 3px;
  background: #f4f2e8;
  font: 11px "Liberation Sans", sans-serif;
  line-height: 8px;
}
.prop-help {
  height: 150px;
  flex: none;
  box-sizing: border-box;
  display: flex;
  justify-content: space-between;
  padding: 9px 6px 0 1px;
  background: #ece9d8;
  border-top: 4px solid #ece9d8;
  box-shadow: inset 0 1px 0 #aca899;
  font-size: 12px;
}
.help-btn {
  width: 15px;
  height: 15px;
  margin-top: -1px;
  border-radius: 50%;
  background: #9c9c9c;
  color: #d8d8d8;
  font: bold 11px/15px "Liberation Sans", sans-serif;
  text-align: center;
}

.statusbar {
  height: 24px;
  flex: none;
  box-sizing: border-box;
  border-top: 1px solid #aca899;
  box-shadow: inset 0 1px 0 #fff;
}
</style>

<style>
html, body { margin: 0; background: #ece9d8; }
</style>
